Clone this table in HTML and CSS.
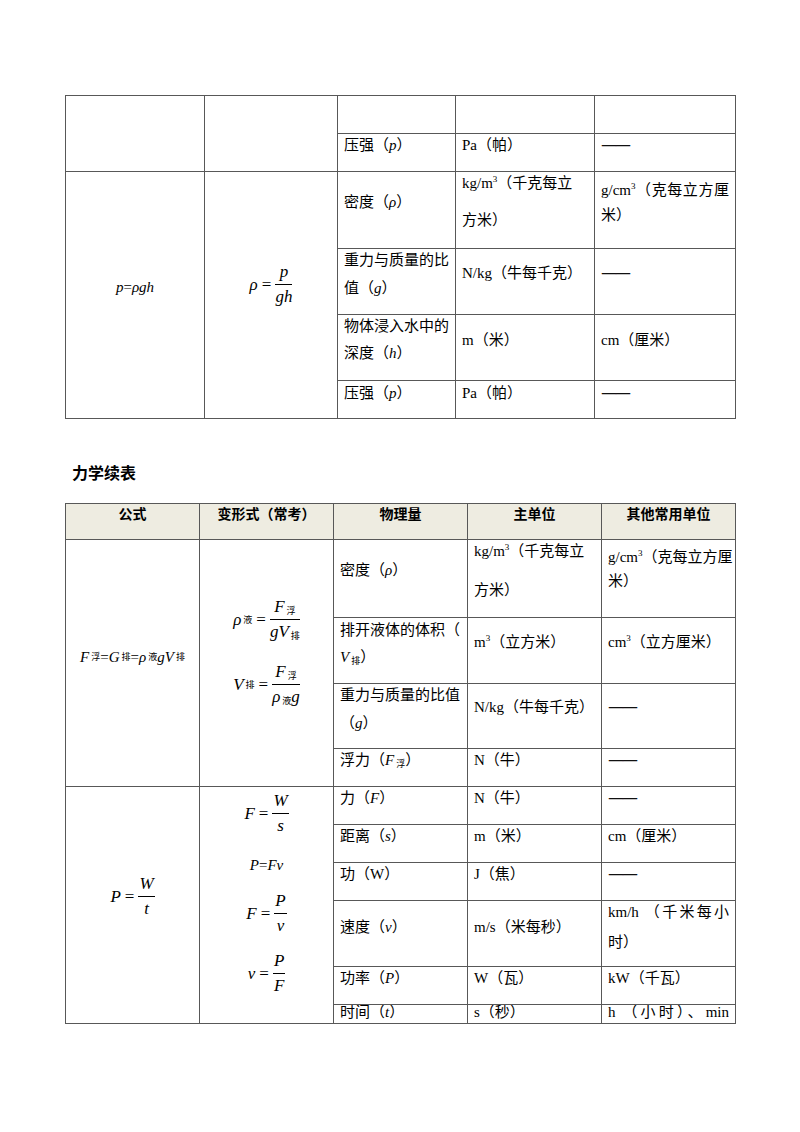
FILE: index.html
```html
<!DOCTYPE html>
<html lang="zh-CN">
<head>
<meta charset="utf-8">
<title>力学续表</title>
<link rel="stylesheet" href="styles.css">
</head>
<body>
<div class="page">
  <div class="tbl t1">
    <div class="c span2"></div>
    <div class="c span2"></div>
    <div class="c"></div><div class="c"></div><div class="c"></div>
    <div class="c">压强（<i>p</i>）</div>
    <div class="c">Pa（帕）</div>
    <div class="c"><span class="dash">——</span></div>

    <div class="c span4 fc pt104"><div class="fm f15"><i>p</i>=<i>ρgh</i></div></div>
    <div class="c span4 fc pt90">
      <div class="fm"><i>ρ</i><span class="eq">=</span><span class="frac"><span class="num"><i>p</i></span><span class="den"><i>gh</i></span></span></div>
    </div>
    <div class="c pt19">密度（<i>ρ</i>）</div>
    <div class="c"><div class="ln">kg/m<sup>3</sup>（千克每立</div><div class="ln g15">方米）</div></div>
    <div class="c pt7"><div class="ln j">g/cm<sup>3</sup>（克每立方厘</div><div class="ln g3">米）</div></div>

    <div class="c"><div class="ln">重力与质量的比</div><div class="ln g6">值（<i>g</i>）</div></div>
    <div class="c pt13">N/kg（牛每千克）</div>
    <div class="c pt13"><span class="dash">——</span></div>

    <div class="c"><div class="ln">物体浸入水中的</div><div class="ln g5">深度（<i>h</i>）</div></div>
    <div class="c pt14">m（米）</div>
    <div class="c pt14">cm（厘米）</div>

    <div class="c pt1">压强（<i>p</i>）</div>
    <div class="c pt1">Pa（帕）</div>
    <div class="c pt1"><span class="dash">——</span></div>
  </div>

  <h2 class="heading">力学续表</h2>

  <div class="tbl t2">
    <div class="c hd">公式</div>
    <div class="c hd">变形式（常考）</div>
    <div class="c hd">物理量</div>
    <div class="c hd">主单位</div>
    <div class="c hd">其他常用单位</div>

    <div class="c span4 fc pt106"><div class="fm f15"><i>F</i><sub>浮</sub>=<i>G</i><sub>排</sub>=<i>ρ</i><sub>液</sub><i>gV</i><sub>排</sub></div></div>
    <div class="c span4 fc pt57 gap20">
      <div class="fm"><i>ρ</i><sub>液</sub><span class="eq">=</span><span class="frac"><span class="num"><i>F</i><sub>浮</sub></span><span class="den"><i>gV</i><sub>排</sub></span></span></div>
      <div class="fm"><i>V</i><sub>排</sub><span class="eq">=</span><span class="frac"><span class="num"><i>F</i><sub>浮</sub></span><span class="den"><i>ρ</i><sub>液</sub><i>g</i></span></span></div>
    </div>
    <div class="c pt19">密度（<i>ρ</i>）</div>
    <div class="c"><div class="ln">kg/m<sup>3</sup>（千克每立</div><div class="ln g17">方米）</div></div>
    <div class="c pt6"><div class="ln">g/cm<sup>3</sup>（克每立方厘</div><div class="ln g2">米）</div></div>

    <div class="c pt1"><div class="ln">排开液体的体积（</div><div class="ln g5"><i>V</i><sub>排</sub>）</div></div>
    <div class="c pt13">m<sup>3</sup>（立方米）</div>
    <div class="c pt13">cm<sup>3</sup>（立方厘米）</div>

    <div class="c"><div class="ln">重力与质量的比值</div><div class="ln g6">（<i>g</i>）</div></div>
    <div class="c pt12">N/kg（牛每千克）</div>
    <div class="c pt12"><span class="dash">——</span></div>

    <div class="c">浮力（<i>F</i><sub>浮</sub>）</div>
    <div class="c">N（牛）</div>
    <div class="c"><span class="dash">——</span></div>

    <div class="c span6 fc pt87">
      <div class="fm"><i>P</i><span class="eq">=</span><span class="frac"><span class="num"><i>W</i></span><span class="den"><i>t</i></span></span></div>
    </div>
    <div class="c span6 fc pt4 gap15">
      <div class="fm"><i>F</i><span class="eq">=</span><span class="frac"><span class="num"><i>W</i></span><span class="den"><i>s</i></span></span></div>
      <div class="fm f15 mt3"><i>P</i>=<i>Fv</i></div>
      <div class="fm"><i>F</i><span class="eq">=</span><span class="frac"><span class="num"><i>P</i></span><span class="den"><i>v</i></span></span></div>
      <div class="fm"><i>v</i><span class="eq">=</span><span class="frac"><span class="num"><i>P</i></span><span class="den"><i>F</i></span></span></div>
    </div>
    <div class="c">力（<i>F</i>）</div>
    <div class="c">N（牛）</div>
    <div class="c"><span class="dash">——</span></div>

    <div class="c">距离（<i>s</i>）</div>
    <div class="c">m（米）</div>
    <div class="c">cm（厘米）</div>

    <div class="c">功（W）</div>
    <div class="c">J（焦）</div>
    <div class="c"><span class="dash">——</span></div>

    <div class="c pt15">速度（<i>v</i>）</div>
    <div class="c pt15">m/s（米每秒）</div>
    <div class="c"><div class="ln j">km/h （千米每小</div><div class="ln g8">时）</div></div>

    <div class="c">功率（<i>P</i>）</div>
    <div class="c">W（瓦）</div>
    <div class="c">kW（千瓦）</div>

    <div class="c last">时间（<i>t</i>）</div>
    <div class="c last">s（秒）</div>
    <div class="c last"><div class="j">h （小时）、min</div></div>
  </div>
</div>
</body>
</html>
```
FILE: styles.css
```css
html, body {
  margin: 0;
  padding: 0;
  background: #fff;
}

.page {
  padding: 95px 0 0 65px;
}

.tbl {
  display: grid;
  gap: 1px;
  padding: 1px;
  background: #585858;
  width: max-content;
}

.t1 {
  grid-template-columns: 138px 132px 117px 138px 140px;
  grid-template-rows: 37px 37px 76px 65px 65px 37px;
}

.t2 {
  grid-template-columns: repeat(5, 133px);
  grid-template-rows: 35px 77px 65px 64px 37px 37px 37px 37px 65px 37px 18px;
}

.c {
  background: #fff;
  padding: 0 6px;
  font-family: "Liberation Serif", "Noto Sans CJK SC", serif;
  font-size: 15px;
  line-height: 22px;
  color: #000;
  min-width: 0;
  white-space: nowrap;
}

.c i {
  font-family: "Liberation Serif", serif;
  font-style: italic;
}

.c sup {
  font-size: 9px;
  line-height: 0;
  vertical-align: 6px;
}

.c sub {
  font-family: "Noto Sans CJK SC", sans-serif;
  font-style: normal;
  font-size: 9px;
  line-height: 0;
  vertical-align: -2px;
  margin-left: 2px;
}

.dash {
  font-family: "DejaVu Sans", sans-serif;
  font-size: 16px;
  letter-spacing: -2px;
  color: #111;
}

.span2 { grid-row: span 2; }
.span4 { grid-row: span 4; }
.span6 { grid-row: span 6; }

.hd {
  background: #eeece1;
  text-align: center;
  font-family: "Noto Sans CJK SC", sans-serif;
  font-weight: bold;
  font-size: 14px;
  line-height: 18px;
}

.last {
  line-height: 14px;
  overflow: hidden;
}

.ln { white-space: nowrap; }
.j {
  white-space: normal;
  text-align: justify;
  text-align-last: justify;
}

.g2 { margin-top: 2px; }
.g3 { margin-top: 3px; }
.g5 { margin-top: 5px; }
.g6 { margin-top: 6px; }
.g8 { margin-top: 8px; }
.g15 { margin-top: 15px; }
.g17 { margin-top: 17px; }

.pt1 { padding-top: 1px; }
.pt4 { padding-top: 4px; }
.pt6 { padding-top: 6px; }
.pt7 { padding-top: 7px; }
.pt12 { padding-top: 12px; }
.pt13 { padding-top: 13px; }
.pt14 { padding-top: 14px; }
.pt15 { padding-top: 15px; }
.pt19 { padding-top: 19px; }
.pt57 { padding-top: 57px; }
.pt87 { padding-top: 87px; }
.pt90 { padding-top: 90px; }
.pt104 { padding-top: 104px; }
.pt106 { padding-top: 106px; }

.fc {
  display: flex;
  flex-direction: column;
  align-items: center;
}
.gap15 { gap: 15px; }
.gap20 { gap: 20px; }
.mt3 { margin-top: 3px; }

.fm {
  display: flex;
  align-items: center;
  font-family: "Liberation Serif", serif;
  font-size: 17px;
  white-space: nowrap;
}
.f15 { font-size: 15px; line-height: 22px; }

.eq {
  font-style: normal;
  margin: 0 4px;
}

.frac {
  display: inline-flex;
  flex-direction: column;
  align-items: stretch;
  text-align: center;
}
.num {
  line-height: 20px;
  padding: 0 1px 2px;
  border-bottom: 1px solid #000;
}
.den {
  line-height: 20px;
  padding-top: 2px;
}

.heading {
  margin: 41px 0 19px 7px;
  font-family: "Noto Sans CJK SC", sans-serif;
  font-weight: bold;
  font-size: 16px;
  line-height: 24px;
  color: #000;
}
```
